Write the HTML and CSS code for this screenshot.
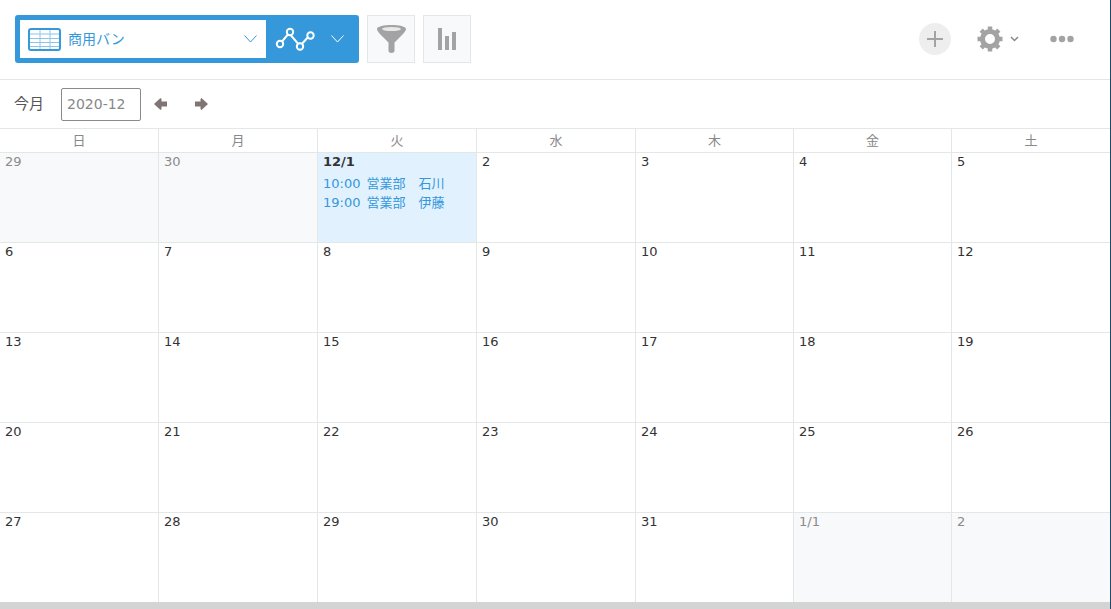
FILE: index.html
```html
<!DOCTYPE html>
<html lang="ja">
<head>
  <meta charset="UTF-8" />
  <title>商用バン</title>
  <link rel="stylesheet" href="styles.css">
</head>
<body>

<div class="page">
  <div class="toolbar">
    <div class="view-select">
      <div class="view-name">
        <svg class="table-icon" width="33" height="23" viewBox="0 0 33 23">
          <path d="M2 6H31M2 10.500H31M2 14.500H31M2 18.500H31M12 2V21M22 2V21" stroke="#8cc5ec" stroke-width="1" fill="none"/>
          <rect x="1" y="1" width="31" height="21" rx="2" fill="none" stroke="#3498db" stroke-width="2"/>
        </svg>
        <span class="view-label">商用バン</span>
        <svg class="chevron" width="13" height="8" viewBox="0 0 13 8">
          <path d="M0.5 0.5L6.5 7L12.5 0.5" fill="none" stroke="#3498db" stroke-width="1"/>
        </svg>
      </div>
      <div class="view-type">
        <svg width="40" height="24" viewBox="0 0 40 24">
          <path d="M5 17L14 6L25 19L35 8" fill="none" stroke="#fff" stroke-width="2"/>
          <circle cx="5" cy="17" r="3.2" fill="#3498db" stroke="#fff" stroke-width="2"/>
          <circle cx="15" cy="5" r="3.2" fill="#3498db" stroke="#fff" stroke-width="2"/>
          <circle cx="25" cy="19.5" r="3.2" fill="#3498db" stroke="#fff" stroke-width="2"/>
          <circle cx="35.5" cy="8.5" r="3.2" fill="#3498db" stroke="#fff" stroke-width="2"/>
        </svg>
        <svg class="chevron" width="13" height="8" viewBox="0 0 13 8">
          <path d="M0.5 0.5L6.5 7L12.5 0.5" fill="none" stroke="#fff" stroke-width="1"/>
        </svg>
      </div>
    </div>

    <div class="tool-btn">
      <svg width="29" height="28" viewBox="0 0 29 28">
        <path d="M0 4C0 1.500 7 0 14.500 0S29 1.500 29 4C29 6 26 9 23 12L17.500 17.500V26C17.500 28.500 11.500 28.500 11.500 26V17.500L6 12C3 9 0 6 0 4Z" fill="#a3a3a3"/>
        <ellipse cx="14.500" cy="4" rx="9.500" ry="2" fill="#e8e8e8"/>
      </svg>
    </div>
    <div class="tool-btn">
      <svg width="18" height="22" viewBox="0 0 18 22">
        <path d="M0 0H4V22H0ZM7 8H11V22H7ZM14 4H18V22H14Z" fill="#a3a3a3"/>
      </svg>
    </div>

    <div class="tool-right">
      <div class="add-btn">
        <svg width="18" height="18" viewBox="0 0 18 18">
          <path d="M9 1V17M1 9H17" stroke="#a3a3a3" stroke-width="2"/>
        </svg>
      </div>
      <svg class="gear" width="26" height="26" viewBox="0 0 26 26">
        <circle cx="13" cy="13" r="7.500" fill="none" stroke="#a3a3a3" stroke-width="5"/>
        <path d="M13 0.500V25.500M0.500 13H25.500M4.200 4.200L21.800 21.800M21.800 4.200L4.200 21.800" stroke="#a3a3a3" stroke-width="4.500" stroke-dasharray="4 17 4"/>
      </svg>
      <svg class="gear-chevron" width="9" height="6" viewBox="0 0 9 6">
        <path d="M1 1L4.500 4.500L8 1" fill="none" stroke="#888" stroke-width="1.500"/>
      </svg>
      <svg class="dots" width="24" height="8" viewBox="0 0 24 8">
        <circle cx="3.500" cy="4" r="3.200" fill="#a3a3a3"/>
        <circle cx="12" cy="4" r="3.200" fill="#a3a3a3"/>
        <circle cx="20.500" cy="4" r="3.200" fill="#a3a3a3"/>
      </svg>
    </div>
  </div>

  <div class="month-bar">
    <span class="today-link">今月</span>
    <div class="month-input">2020-12</div>
    <svg class="arrow" width="13" height="12" viewBox="0 0 13 12">
      <path d="M0 6L6.500 0L7.500 1V3.500H13V8.500H7.500V11L6.500 12Z" fill="#7f7573"/>
    </svg>
    <svg class="arrow arrow-next" width="13" height="12" viewBox="0 0 13 12">
      <path d="M13 6L6.500 0L5.500 1V3.500H0V8.500H5.500V11L6.500 12Z" fill="#7f7573"/>
    </svg>
  </div>

  <div class="calendar">
    <div class="head">日</div>
    <div class="head">月</div>
    <div class="head">火</div>
    <div class="head">水</div>
    <div class="head">木</div>
    <div class="head">金</div>
    <div class="head">土</div>

    <div class="day other">29</div>
    <div class="day other">30</div>
    <div class="day today">
      <div class="today-date">12/1</div>
      <div class="event">10:00 営業部　石川</div>
      <div class="event">19:00 営業部　伊藤</div>
    </div>
    <div class="day">2</div>
    <div class="day">3</div>
    <div class="day">4</div>
    <div class="day">5</div>

    <div class="day">6</div>
    <div class="day">7</div>
    <div class="day">8</div>
    <div class="day">9</div>
    <div class="day">10</div>
    <div class="day">11</div>
    <div class="day">12</div>

    <div class="day">13</div>
    <div class="day">14</div>
    <div class="day">15</div>
    <div class="day">16</div>
    <div class="day">17</div>
    <div class="day">18</div>
    <div class="day">19</div>

    <div class="day">20</div>
    <div class="day">21</div>
    <div class="day">22</div>
    <div class="day">23</div>
    <div class="day">24</div>
    <div class="day">25</div>
    <div class="day">26</div>

    <div class="day last">27</div>
    <div class="day last">28</div>
    <div class="day last">29</div>
    <div class="day last">30</div>
    <div class="day last">31</div>
    <div class="day last other">1/1</div>
    <div class="day last other">2</div>
  </div>

  <div class="scrollbar"></div>
</div>

</body>
</html>
```

FILE: styles.css
```css
html, body {
  margin: 0;
  padding: 0;
  overflow: hidden;
  background: #fff;
  color: #333;
  font-family: 'DejaVu Sans', 'Noto Sans CJK JP', sans-serif;
  font-size: 13px;
}

.page {
  width: 1110px;
  height: 609px;
  border-right: 1px solid #1c4a6b;
}

.toolbar {
  display: flex;
  align-items: flex-start;
  gap: 8px;
  height: 80px;
  padding: 15px 0 0 15px;
  box-sizing: border-box;
  border-bottom: 1px solid #e3e7e8;
}

.view-select {
  display: flex;
  width: 344px;
  height: 48px;
  padding: 5px;
  box-sizing: border-box;
  background: #3498db;
  border-radius: 3px;
}

.view-name {
  display: flex;
  align-items: center;
  width: 246px;
  height: 38px;
  padding-left: 8px;
  box-sizing: border-box;
  background: #fff;
}

.table-icon {
  margin-right: 7px;
}

.view-label {
  flex: 1;
  margin-bottom: 2px;
  font-family: 'Noto Sans CJK JP', sans-serif;
  font-size: 14px;
  color: #3498db;
}

.view-name .chevron {
  margin-right: 9px;
}

.view-type {
  display: flex;
  align-items: center;
  padding-left: 9px;
}

.view-type .chevron {
  margin-left: 16px;
}

.tool-btn {
  display: flex;
  align-items: center;
  justify-content: center;
  width: 48px;
  height: 48px;
  box-sizing: border-box;
  background: #f7f9fa;
  border: 1px solid #e3e7e8;
}

.tool-right {
  display: flex;
  align-items: center;
  height: 48px;
  margin-left: auto;
  padding-right: 36px;
}

.add-btn {
  display: flex;
  align-items: center;
  justify-content: center;
  width: 32px;
  height: 32px;
  border-radius: 50%;
  background: #eee;
}

.gear {
  margin-left: 26px;
}

.gear-chevron {
  margin-left: 7px;
}

.dots {
  margin-left: 31px;
}

.month-bar {
  display: flex;
  align-items: center;
  height: 48px;
  padding-left: 14px;
  box-sizing: border-box;
}

.today-link {
  margin-right: 17px;
  margin-bottom: 4px;
  font-family: 'Noto Sans CJK JP', sans-serif;
  font-size: 15px;
  color: #555;
}

.month-input {
  width: 80px;
  height: 33px;
  line-height: 31px;
  padding-left: 5px;
  box-sizing: border-box;
  border: 1px solid #8a8a8a;
  border-radius: 2px;
  font-size: 14px;
  color: #888;
}

.arrow {
  margin-left: 13px;
}

.arrow-next {
  margin-left: 28px;
}

.calendar {
  display: grid;
  grid-template-columns: 159px 159px 159px 159px 158px 158px 158px;
  grid-template-rows: 25px repeat(4, 90px) 89px;
}

.head {
  border-top: 1px solid #e3e7e8;
  border-bottom: 1px solid #e3e7e8;
  border-right: 1px solid #e3e7e8;
  text-align: center;
  line-height: 22px;
  font-family: 'Noto Sans CJK JP', sans-serif;
  font-size: 13px;
  color: #888;
}

.day {
  padding: 0 5px;
  border-right: 1px solid #e3e7e8;
  border-bottom: 1px solid #e3e7e8;
  line-height: 18px;
  color: #333;
}

.head:nth-child(7),
.day:nth-child(7n) {
  border-right: none;
}

.day.last {
  border-bottom: none;
}

.day.other {
  background: #f7f9fa;
  color: #8b8b8b;
}

.day.today {
  background: #e1f1fe;
}

.today-date {
  font-weight: bold;
  margin-bottom: 3px;
}

.event {
  line-height: 19px;
  color: #3498db;
  white-space: nowrap;
  word-spacing: 2px;
}

.scrollbar {
  height: 7px;
  background: #d4d4d4;
}
```
